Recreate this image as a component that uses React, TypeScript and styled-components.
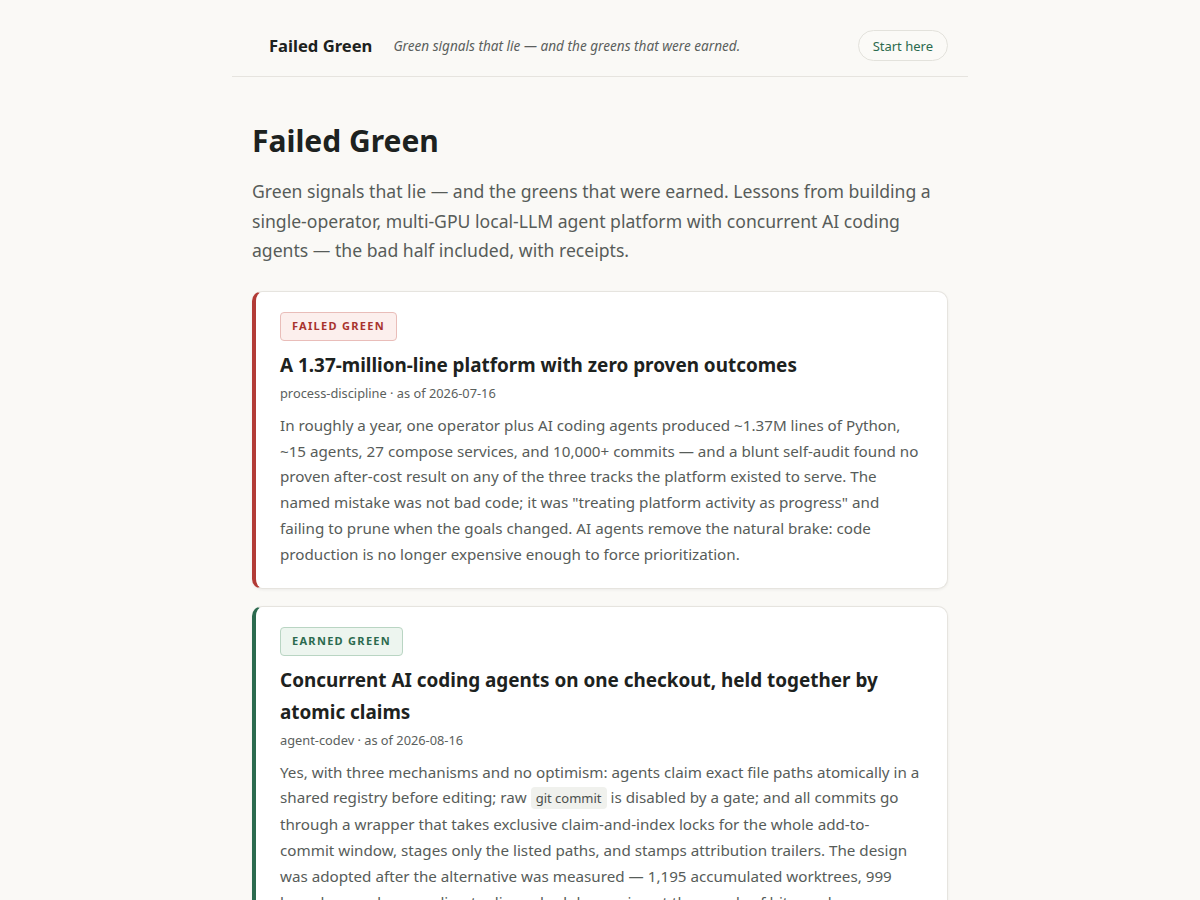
import React from 'react'
import styled, { createGlobalStyle } from 'styled-components'

const GlobalStyle = createGlobalStyle`
    html, body {
        margin : 0;
        padding : 0;
        background : #faf9f6;
        font-family : "Noto Sans", "Open Sans", sans-serif;
        color : #1d2220;
    }
`

type Tone = 'failed' | 'earned'

const tones = {
    failed : { edge : '#b23b36', text : '#a8332e', bg : '#fcefed', border : '#e9bdb9' },
    earned : { edge : '#2b6a4e', text : '#2b6a4e', bg : '#edf5ef', border : '#b9d5c3' },
}

const Code = styled.code`
    font-family : "Noto Sans", sans-serif;
    font-size : 13px;
    background : #f0f1ed;
    border-radius : 4px;
    padding : 2px 5px;
    color : #4a4f4c;
`

const getCards = (): { tone: Tone; badge: string; title: string; meta: string; body: React.ReactNode }[] => [
    {
        tone : 'failed',
        badge : 'Failed green',
        title : 'A 1.37-million-line platform with zero proven outcomes',
        meta : 'process-discipline · as of 2026-07-16',
        body : <>In roughly a year, one operator plus AI coding agents produced ~1.37M lines of Python, ~15 agents, 27 compose services, and 10,000+ commits — and a blunt self-audit found no proven after-cost result on any of the three tracks the platform existed to serve. The named mistake was not bad code; it was "treating platform activity as progress" and failing to prune when the goals changed. AI agents remove the natural brake: code production is no longer expensive enough to force prioritization.</>,
    },
    {
        tone : 'earned',
        badge : 'Earned green',
        title : 'Concurrent AI coding agents on one checkout, held together by atomic claims',
        meta : 'agent-codev · as of 2026-08-16',
        body : <>Yes, with three mechanisms and no optimism: agents claim exact file paths atomically in a shared registry before editing; raw <Code>git commit</Code> is disabled by a gate; and all commits go through a wrapper that takes exclusive claim-and-index locks for the whole add-to-commit window, stages only the listed paths, and stamps attribution trailers. The design was adopted after the alternative was measured — 1,195 accumulated worktrees, 999 branches, and a sprawling tooling schedule running at thousands of hits per hour.</>,
    },
]

const App: React.FC = () => {
    const cards = getCards()
    return (
        <>
            <GlobalStyle />
            <Page>
                <Header>
                    <Brand>Failed Green</Brand>
                    <Tagline>Green signals that lie — and the greens that were earned.</Tagline>
                    <StartButton>Start here</StartButton>
                </Header>
                <Main>
                    <Title>Failed Green</Title>
                    <Lead>
                        Green signals that lie — and the greens that were earned. Lessons from building a single-operator, multi-GPU local-LLM agent platform with concurrent AI coding agents — the bad half included, with receipts.
                    </Lead>
                    <CardList>
                        {cards.map((c) => (
                            <Card key={c.title} tone={c.tone}>
                                <Badge tone={c.tone}>{c.badge}</Badge>
                                <CardTitle>{c.title}</CardTitle>
                                <Meta>{c.meta}</Meta>
                                <Body>{c.body}</Body>
                            </Card>
                        ))}
                    </CardList>
                </Main>
            </Page>
        </>
    )
}

const Page = styled.div`
    width : 736px;
    margin : 0 auto;
`
const Header = styled.header`
    box-sizing : border-box;
    display : flex;
    align-items : center;
    padding : 30px 20px 15px 37px;
    border-bottom : 1px solid #e6e4df;
`
const Brand = styled.div`
    font-size : 16.6px;
    font-weight : 700;
    color : #1d2220;
`
const Tagline = styled.div`
    margin-left : 21px;
    font-size : 13.6px;
    font-style : italic;
    color : #5b605d;
    flex : 1;
`
const StartButton = styled.a`
    font-size : 13px;
    line-height : 18px;
    color : #2b6a4e;
    border : 1px solid #e3e2dc;
    border-radius : 999px;
    padding : 5.5px 14px;
    background : #fbfaf7;
`
const Main = styled.main`
    padding : 43px 20px 40px;
`
const Title = styled.h1`
    margin : 0;
    font-size : 30px;
    line-height : 42px;
    font-weight : 700;
    color : #1d2220;
`
const Lead = styled.p`
    margin : 15px 0 0;
    font-size : 17.6px;
    line-height : 29.6px;
    color : #575c59;
`
const CardList = styled.div`
    margin-top : 25px;
    display : flex;
    flex-direction : column;
    gap : 17px;
`
const Card = styled.article<{ tone: Tone }>`
    background : #ffffff;
    border : 1px solid #e6e4df;
    border-left : 4px solid ${(p) => tones[p.tone].edge};
    border-radius : 10px;
    padding : 20px 24px 20px 24px;
    box-shadow : 0 1px 3px rgba(0, 0, 0, 0.06);
`
const Badge = styled.span<{ tone: Tone }>`
    display : inline-block;
    font-size : 11px;
    font-weight : 700;
    letter-spacing : 1.3px;
    text-transform : uppercase;
    line-height : 16px;
    padding : 5.5px 11px;
    border-radius : 4px;
    color : ${(p) => tones[p.tone].text};
    background : ${(p) => tones[p.tone].bg};
    border : 1px solid ${(p) => tones[p.tone].border};
`
const CardTitle = styled.h2`
    margin : 8px 0 0;
    font-size : 18.9px;
    line-height : 32px;
    font-weight : 700;
    color : #1d2220;
`
const Meta = styled.div`
    margin-top : 2px;
    font-size : 12.8px;
    line-height : 20px;
    color : #5b605d;
`
const Body = styled.p`
    margin : 10px 0 0;
    font-size : 15.2px;
    line-height : 25.8px;
    color : #575c59;
`

export default App
